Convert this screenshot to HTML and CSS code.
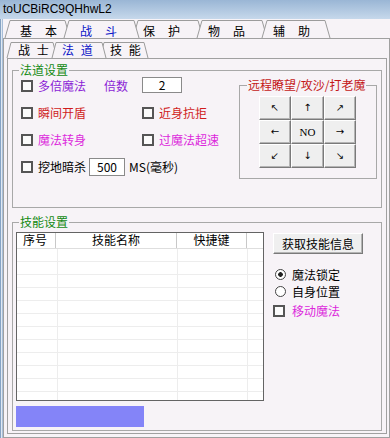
FILE: index.html
```html
<!DOCTYPE html>
<html lang="zh-CN">
<head>
    <meta charset="UTF-8">
    <meta name="viewport" content="width=device-width, initial-scale=1.0">
    <title>toUCBiRC9QHhwL2</title>
    <link rel="stylesheet" href="styles.css">
</head>
<body>

    <div class="titlebar">toUCBiRC9QHhwL2</div>

    <div class="frame">
        <!-- top level tabs -->
        <div class="tabs main-tabs">
            <div class="tab"><svg width="65" height="19"><polygon points="0,19 5,1.5 60,1.5 65,19"/><polyline points="0,19 5,1.5 60,1.5 65,19"/></svg><span>基　本</span></div>
            <div class="tab active"><svg width="75" height="19"><polygon points="0,19 5,1.5 70,1.5 75,19"/><polyline points="0,19 5,1.5 70,1.5 75,19"/></svg><span>战　斗</span></div>
            <div class="tab"><svg width="70" height="19"><polygon points="0,19 5,1.5 65,1.5 70,19"/><polyline points="0,19 5,1.5 65,1.5 70,19"/></svg><span>保　护</span></div>
            <div class="tab"><svg width="70" height="19"><polygon points="0,19 5,1.5 65,1.5 70,19"/><polyline points="0,19 5,1.5 65,1.5 70,19"/></svg><span>物　品</span></div>
            <div class="tab"><svg width="68" height="19"><polygon points="0,19 5,1.5 63,1.5 68,19"/><polyline points="0,19 5,1.5 63,1.5 68,19"/></svg><span>辅　助</span></div>
        </div>

        <div class="main-panel">
            <!-- second level tabs -->
            <div class="tabs sub-tabs">
                <div class="tab"><svg width="50" height="19"><polygon points="0,19 4,3.5 46,3.5 50,19"/><polyline points="0,19 4,3.5 46,3.5 50,19"/></svg><span>战 士</span></div>
                <div class="tab active"><svg width="54" height="19"><polygon points="0,19 4,3.5 50,3.5 54,19"/><polyline points="0,19 4,3.5 50,3.5 54,19"/></svg><span>法 道</span></div>
                <div class="tab"><svg width="48" height="19"><polygon points="0,19 4,3.5 44,3.5 48,19"/><polyline points="0,19 4,3.5 44,3.5 48,19"/></svg><span>技 能</span></div>
            </div>

            <div class="sub-panel">
                <fieldset class="group magic">
                    <legend>法道设置</legend>
                    <div class="magic-body">
                        <div class="opts">
                            <div class="row">
                                <div class="cell">
                                    <label class="check purple"><span class="box"></span>多倍魔法</label>
                                    <span class="purple times">倍数</span>
                                </div>
                                <span class="field n2">2</span>
                            </div>
                            <div class="row">
                                <div class="cell"><label class="check red"><span class="box"></span>瞬间开盾</label></div>
                                <label class="check red"><span class="box"></span>近身抗拒</label>
                            </div>
                            <div class="row">
                                <div class="cell"><label class="check pink"><span class="box"></span>魔法转身</label></div>
                                <label class="check pink"><span class="box"></span>过魔法超速</label>
                            </div>
                            <div class="row">
                                <label class="check"><span class="box"></span>挖地暗杀</label>
                                <span class="field n500">500</span>
                                <span class="unit">MS(毫秒)</span>
                            </div>
                        </div>

                        <fieldset class="remote">
                            <legend>远程瞭望/攻沙/打老魔</legend>
                            <div class="pad">
                                <button class="btn">↖</button>
                                <button class="btn">↑</button>
                                <button class="btn">↗</button>
                                <button class="btn">←</button>
                                <button class="btn no">NO</button>
                                <button class="btn">→</button>
                                <button class="btn">↙</button>
                                <button class="btn">↓</button>
                                <button class="btn">↘</button>
                            </div>
                        </fieldset>
                    </div>
                </fieldset>

                <fieldset class="group skills">
                    <legend>技能设置</legend>
                    <div class="skills-body">
                        <div class="skills-left">
                            <div class="list">
                                <div class="list-head">
                                    <div class="c1 first">序号</div>
                                    <div class="c2">技能名称</div>
                                    <div class="c3">快捷键</div>
                                    <div class="c4"></div>
                                </div>
                                <div class="list-body"></div>
                            </div>
                            <div class="bar"></div>
                        </div>

                        <div class="side">
                            <button class="btn info">获取技能信息</button>
                            <label class="radio-row first"><span class="radio on"></span>魔法锁定</label>
                            <label class="radio-row"><span class="radio"></span>自身位置</label>
                            <label class="check pink move"><span class="box"></span>移动魔法</label>
                        </div>
                    </div>
                </fieldset>
            </div>
        </div>
    </div>

</body>
</html>
```

FILE: styles.css
```css
body {
    margin: 0;
    width: 390px;
    height: 438px;
    overflow: hidden;
    background-color: #f7f3f7;
    font-family: "Noto Sans CJK SC", "Liberation Sans", sans-serif;
    font-size: 12px;
    line-height: 14px;
    color: #000;
}

.titlebar {
    height: 19px;
    line-height: 19px;
    padding-left: 3px;
    font-family: "Liberation Sans", Arial, sans-serif;
    font-size: 12px;
    background: linear-gradient(#9ab6d5, #c6d8eb);
}

.frame {
    padding-left: 3px;
    background: linear-gradient(90deg, #86a2c3 0 1px, #dfe8f2 1px 2px, #a8bed8 2px 3px, transparent 3px);
}

/* tabs */
.tabs {
    display: flex;
    height: 19px;
}

.main-tabs {
    padding-left: 2px;
}

.tab {
    position: relative;
    flex: none;
    height: 19px;
}

.tab svg {
    position: absolute;
    left: 0;
    top: 0;
    overflow: visible;
}

.tab polygon {
    fill: #f7f3f7;
    stroke: none;
}

.tab polyline {
    fill: none;
    stroke: #9c9c9c;
    stroke-width: 1;
}

.tab span {
    position: relative;
    display: block;
    line-height: 14px;
    white-space: nowrap;
}

.tab.active {
    z-index: 2;
}

.tab.active span {
    color: #0a14c8;
}

.main-tabs .tab span {
    padding-top: 5px;
    letter-spacing: 0.5px;
}

.main-tabs .tab:nth-child(1) { width: 65px; }
.main-tabs .tab:nth-child(2) { width: 75px; margin-left: -6px; }
.main-tabs .tab:nth-child(3) { width: 70px; margin-left: -6px; }
.main-tabs .tab:nth-child(4) { width: 70px; margin-left: -6px; }
.main-tabs .tab:nth-child(5) { width: 68px; margin-left: -5px; }

.main-tabs .tab:nth-child(1) span { padding-left: 15px; }
.main-tabs .tab:nth-child(2) span { padding-left: 16px; }
.main-tabs .tab:nth-child(3) span { padding-left: 10px; }
.main-tabs .tab:nth-child(4) span { padding-left: 11px; }
.main-tabs .tab:nth-child(5) span { padding-left: 11px; }

.sub-tabs .tab span {
    padding-top: 4px;
    letter-spacing: 2px;
}

.sub-tabs .tab:nth-child(1) { width: 50px; }
.sub-tabs .tab:nth-child(2) { width: 54px; margin-left: -5px; }
.sub-tabs .tab:nth-child(3) { width: 48px; margin-left: -6px; }

.sub-tabs .tab:nth-child(1) span { padding-left: 11px; }
.sub-tabs .tab:nth-child(2) span { padding-left: 10px; }
.sub-tabs .tab:nth-child(3) span { padding-left: 10px; }

/* panels */
.main-panel {
    width: 387px;
    height: 400px;
    box-sizing: border-box;
    border: 1px solid #a0a0a0;
    padding: 0 3px 3px;
}

.sub-panel {
    width: 380px;
    height: 376px;
    box-sizing: border-box;
    border: 1px solid #a0a0a0;
    padding: 4px 4px 2px;
}

fieldset {
    margin: 0;
    min-width: 0;
    box-sizing: border-box;
    border: 1px solid #a8a8a8;
}

legend {
    padding: 0 1px;
    line-height: 14px;
}

.group {
    width: 370px;
}

.group legend {
    color: #138a13;
}

.magic {
    height: 145px;
    padding: 0 4px 0 8px;
}

.magic legend {
    margin-left: -2px;
}

.magic-body {
    display: flex;
}

.opts {
    display: grid;
    grid-auto-rows: 17px;
    row-gap: 10px;
}

.row {
    display: flex;
    align-items: center;
}

.cell {
    width: 121px;
    display: flex;
    align-items: center;
}

.check {
    display: inline-flex;
    align-items: center;
    gap: 5px;
    white-space: nowrap;
}

.box {
    width: 12px;
    height: 12px;
    box-sizing: border-box;
    border: 2px solid #555;
    background-color: #fbfbfb;
}

.purple { color: #8b1ed6; }
.red { color: #d01c1c; }
.pink { color: #dc28dc; }

.times {
    margin-left: 18px;
}

.field {
    display: block;
    box-sizing: border-box;
    background-color: #fff;
    border: 1px solid #8a8a8a;
    text-align: center;
}

.n2 {
    width: 40px;
    height: 16px;
    line-height: 14px;
    margin-top: -1px;
}

.n500 {
    width: 36px;
    height: 18px;
    line-height: 16px;
    margin-left: 3px;
}

.unit {
    margin-left: 4px;
}

.remote {
    width: 138px;
    height: 101px;
    margin: 1px 0 0 auto;
    padding: 4px 0 0 8px;
}

.remote legend {
    margin-left: -1px;
    color: #c41818;
}

.pad {
    display: grid;
    grid-template-columns: 32px 33px 32px;
    grid-template-rows: repeat(3, 24px);
    margin-left: 11px;
}

.btn {
    margin: 0;
    padding: 0;
    box-sizing: border-box;
    border: 1px solid;
    border-color: #fff #7a7a7a #7a7a7a #fff;
    box-shadow: inset -1px -1px 0 #b4b4b4;
    background-color: #efefef;
    font-family: "DejaVu Sans", sans-serif;
    font-size: 10px;
    line-height: 12px;
    color: #000;
}

.btn.no {
    font-family: "Liberation Serif", serif;
    font-size: 11px;
}

/* skills */
.skills {
    height: 216px;
    margin-top: 7px;
    padding: 3px 0 0 3px;
}

.skills legend {
    margin-left: 3px;
}

.skills-body {
    display: flex;
}

.list {
    width: 248px;
    height: 169px;
    box-sizing: border-box;
    border: 1px solid #646464;
    background-color: #fff;
    overflow: hidden;
}

.list-head {
    display: flex;
    height: 16px;
    box-sizing: border-box;
    border-bottom: 1px solid #dedede;
    line-height: 14px;
}

.list-head div {
    box-sizing: border-box;
    border-right: 1px solid #c8c8c8;
    text-align: center;
}

.list-head .first {
    text-align: left;
    padding-left: 6px;
}

.c1 { width: 39px; }
.c2 { width: 121px; }
.c3 { width: 70px; }
.list-head .c4 { flex: 1; border-right: none; }

.list-body {
    height: 151px;
    background:
        linear-gradient(90deg, transparent 40px, #ededed 40px 41px, transparent 41px 160px, #ededed 160px 161px, transparent 161px 230px, #ededed 230px 231px, transparent 231px),
        repeating-linear-gradient(transparent 0 12px, #ededed 12px 13px);
}

.bar {
    width: 128px;
    height: 21px;
    margin-top: 5px;
    background-color: #8484f8;
}

.side {
    margin-left: 9px;
    display: flex;
    flex-direction: column;
    align-items: flex-start;
}

.btn.info {
    width: 90px;
    height: 21px;
    margin-top: 1px;
    font-family: "Noto Sans CJK SC", sans-serif;
    font-size: 12px;
}

.radio-row {
    display: flex;
    align-items: center;
    height: 17px;
    gap: 6px;
    padding-left: 2px;
}

.radio-row.first {
    margin-top: 12px;
}

.radio {
    width: 11px;
    height: 11px;
    box-sizing: border-box;
    border: 1.5px solid #444;
    border-radius: 50%;
    background-color: #fff;
}

.radio.on {
    background: radial-gradient(circle, #222 0 2px, #fff 2.6px);
}

.move {
    margin-top: 3px;
    height: 15px;
    gap: 7px;
}
```
